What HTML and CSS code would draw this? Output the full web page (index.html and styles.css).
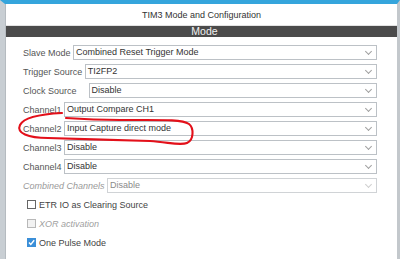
FILE: index.html
```html
<!DOCTYPE html>
<html lang="en">
<head>
    <meta charset="UTF-8">
    <meta name="viewport" content="width=device-width, initial-scale=1.0">
    <title>TIM3 Mode and Configuration</title>
    <link rel="stylesheet" href="styles.css">
</head>
<body>
    <div class="frame">
        <div class="panel">
            <div class="title">TIM3 Mode and Configuration</div>
            <div class="section-head">Mode</div>
            <div class="form">
                <div class="row">
                    <label>Slave Mode</label>
                    <div class="select">Combined Reset Trigger Mode</div>
                </div>
                <div class="row">
                    <label>Trigger Source</label>
                    <div class="select">TI2FP2</div>
                </div>
                <div class="row">
                    <label class="wide">Clock Source</label>
                    <div class="select">Disable</div>
                </div>
                <div class="row">
                    <label>Channel1</label>
                    <div class="select">Output Compare CH1</div>
                </div>
                <div class="row">
                    <label>Channel2</label>
                    <div class="select">Input Capture direct mode</div>
                </div>
                <div class="row">
                    <label>Channel3</label>
                    <div class="select">Disable</div>
                </div>
                <div class="row">
                    <label>Channel4</label>
                    <div class="select">Disable</div>
                </div>
                <div class="row disabled">
                    <label>Combined Channels</label>
                    <div class="select">Disable</div>
                </div>
                <div class="check">
                    <span class="box"></span>
                    <span>ETR IO as Clearing Source</span>
                </div>
                <div class="check disabled">
                    <span class="box"></span>
                    <span>XOR activation</span>
                </div>
                <div class="check">
                    <span class="box checked">
                        <svg width="9" height="9" viewBox="0 0 9 9"><path d="M2 4.5 L3.8 6.5 L7.2 2.3" fill="none" stroke="#fff" stroke-width="1.4"/></svg>
                    </span>
                    <span>One Pulse Mode</span>
                </div>
            </div>
        </div>
        <!-- hand drawn mark around Channel2 -->
        <svg class="scribble" width="400" height="259" viewBox="0 0 400 259">
            <path d="M62 113 C42 114 24 117 20 125 C16 133 28 138 48 138 C80 139 120 140 150 141 C168 142 180 146 187 143 C194 140 194 128 189 124 C182 119 160 120 120 120 C100 120 80 119 66 118" fill="none" stroke="#e3101a" stroke-width="2.1" stroke-linecap="round"/>
        </svg>
    </div>
</body>
</html>
```

FILE: styles.css
```css
body {
    margin: 0;
    padding: 0;
    font-family: "Liberation Sans", Arial, sans-serif;
    background-color: #fff;
}
.frame {
    position: relative;
    width: 400px;
    height: 259px;
    box-sizing: border-box;
    border-top: 4px solid #35a5dc;
    border-left: 5px solid #c8ced3;
    border-right: 3px solid #c3c8cc;
    overflow: hidden;
}
.panel {
    border-left: 1px solid #b5bbc0;
    height: 100%;
}
.title {
    height: 22px;
    line-height: 23px;
    text-align: center;
    font-size: 9px;
    color: #333;
    border-bottom: 1px solid #e3e3e3;
    box-sizing: border-box;
}
.section-head {
    height: 11px;
    line-height: 11px;
    background-color: #4b4b4b;
    color: #f2f2f2;
    text-align: center;
    font-size: 10.5px;
    padding-left: 6px;
}
.form {
    padding: 8px 20px 0 17px;
    display: flex;
    flex-direction: column;
    gap: 4px;
}
.row {
    display: flex;
    align-items: center;
    height: 15px;
}
.row label {
    font-size: 9px;
    color: #555;
    margin-right: 2.5px;
    white-space: nowrap;
}
.row label.wide {
    margin-right: 12px;
}
.select {
    flex: 1;
    height: 15px;
    box-sizing: border-box;
    border: 1px solid #bcc1c6;
    background-color: #fff;
    font-size: 9px;
    color: #333;
    line-height: 13px;
    padding-left: 2px;
    position: relative;
}
.select::after {
    content: "";
    position: absolute;
    right: 5px;
    top: 3px;
    width: 4px;
    height: 4px;
    border-right: 1px solid #a0a0a0;
    border-bottom: 1px solid #a0a0a0;
    transform: rotate(45deg);
}
.row.disabled label {
    font-style: italic;
    color: #9a9a9a;
}
.row.disabled .select {
    color: #8a8a8a;
    border-color: #d0d3d6;
}
.row.disabled .select::after {
    border-color: #cfcfcf;
}
.check {
    display: flex;
    align-items: center;
    gap: 3px;
    height: 15px;
    margin-left: 4px;
    font-size: 9px;
    color: #444;
}
.check:first-of-type {
    margin-top: 4px;
}
.check .box {
    width: 9px;
    height: 9px;
    box-sizing: border-box;
    border: 1px solid #666;
    background-color: #fff;
    display: flex;
}
.check .box.checked {
    background-color: #3b8fd8;
    border-color: #3b8fd8;
}
.check .box svg {
    display: block;
    margin: -1px;
}
.check.disabled {
    color: #a0a0a0;
    font-style: italic;
}
.check.disabled .box {
    border-color: #b8b8b8;
    background-color: #f2f2f2;
}
.scribble {
    position: absolute;
    left: -5px;
    top: -4px;
    pointer-events: none;
}
```
